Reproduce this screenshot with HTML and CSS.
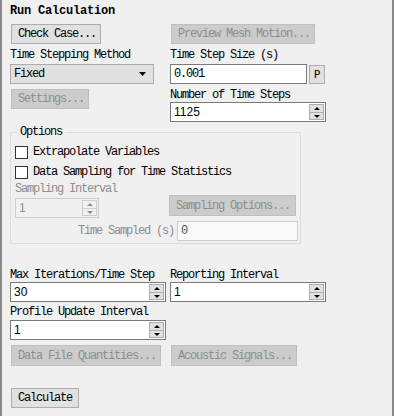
FILE: index.html
```html
<!DOCTYPE html>
<html lang="en">
<head>
  <meta charset="UTF-8">
  <title>Run Calculation</title>
  <link rel="stylesheet" href="styles.css">
</head>
<body>
  <div class="panel">
    <div class="title">Run Calculation</div>

    <div class="two row1">
      <div><button class="btn btn-check">Check Case...</button></div>
      <div><button class="btn disabled btn-preview">Preview Mesh Motion...</button></div>
    </div>

    <div class="two row2">
      <div>
        <div class="label">Time Stepping Method</div>
        <div class="select">
          <span>Fixed</span>
          <svg class="caret" width="7" height="4" viewBox="0 0 7 4"><path d="M0 0h7L3.5 4z" fill="#000"/></svg>
        </div>
      </div>
      <div>
        <div class="label">Time Step Size (s)</div>
        <div class="field-row">
          <div class="field field-step"><span class="mono">0.001</span></div>
          <button class="btn btn-p">P</button>
        </div>
      </div>
    </div>

    <div class="two row3">
      <div><button class="btn disabled btn-settings">Settings...</button></div>
      <div>
        <div class="label">Number of Time Steps</div>
        <div class="field spin-field"><span class="num">1125</span><span class="spin"><span class="up"></span><span class="down"></span></span></div>
      </div>
    </div>

    <fieldset class="options">
      <legend>Options</legend>
      <div class="chk-row"><span class="chk"></span>Extrapolate Variables</div>
      <div class="chk-row"><span class="chk"></span>Data Sampling for Time Statistics</div>
      <div class="sampling">
        <div>
          <div class="label dim">Sampling Interval</div>
          <div class="field spin-field off"><span class="num">1</span><span class="spin"><span class="up"></span><span class="down"></span></span></div>
        </div>
        <button class="btn disabled btn-sampling">Sampling Options...</button>
      </div>
      <div class="sampled-row">
        <span class="label dim">Time Sampled (s)</span>
        <div class="field off-light"><span class="mono">0</span></div>
      </div>
    </fieldset>

    <div class="two row4">
      <div>
        <div class="label">Max Iterations/Time Step</div>
        <div class="field spin-field"><span class="num">30</span><span class="spin"><span class="up"></span><span class="down"></span></span></div>
      </div>
      <div>
        <div class="label">Reporting Interval</div>
        <div class="field spin-field"><span class="num">1</span><span class="spin"><span class="up"></span><span class="down"></span></span></div>
      </div>
    </div>

    <div class="two row5">
      <div>
        <div class="label">Profile Update Interval</div>
        <div class="field spin-field"><span class="num">1</span><span class="spin"><span class="up"></span><span class="down"></span></span></div>
      </div>
    </div>

    <div class="two row6">
      <div><button class="btn disabled btn-data">Data File Quantities...</button></div>
      <div><button class="btn disabled btn-acoustic">Acoustic Signals...</button></div>
    </div>

    <div class="row7">
      <button class="btn btn-calc">Calculate</button>
    </div>
  </div>
</body>
</html>
```

FILE: styles.css
```css
body {
  margin: 0;
  padding: 0;
  background-color: #f0f0f0;
  font-family: "Liberation Mono", monospace;
  font-size: 12px;
  letter-spacing: -1.2px;
  color: #000;
}

.panel {
  box-sizing: border-box;
  width: 394px;
  height: 416px;
  border-left: 2px solid #8a8a8a;
  border-right: 2px solid #8a8a8a;
  padding-left: 8px;
  overflow: hidden;
}

.title {
  padding-top: 4px;
  line-height: 14px;
  font-weight: bold;
  letter-spacing: -0.2px;
}

.two {
  display: grid;
  grid-template-columns: 155px 155px;
  column-gap: 5px;
}

.label {
  line-height: 14px;
  white-space: nowrap;
}

.dim {
  color: #8d8d8d;
}

.mono {
  font-family: "Liberation Mono", monospace;
}

.num {
  font-family: "Liberation Sans", sans-serif;
  letter-spacing: 0;
}

/* buttons */
.btn {
  box-sizing: border-box;
  display: block;
  height: 20px;
  margin: 0 0 0 1px;
  padding: 0 0 0 6px;
  font-family: inherit;
  font-size: 12px;
  letter-spacing: -1.2px;
  text-align: left;
  color: #000;
  background-color: #e1e1e1;
  border: 1px solid #adadad;
  border-radius: 0;
  white-space: nowrap;
}

.btn.disabled {
  color: #8d8d8d;
  background-color: #cccccc;
  border-color: #bfbfbf;
}

.row1 {
  margin-top: 6px;
}

.btn-check { width: 90px; }
.btn-preview { width: 144px; }

/* row 2 */
.row2 {
  margin-top: 4px;
}

.row2 .label {
  margin-bottom: 2px;
}

.select {
  box-sizing: border-box;
  width: 144px;
  height: 20px;
  display: flex;
  align-items: center;
  justify-content: space-between;
  padding: 0 7px 0 3px;
  background-color: #e1e1e1;
  border: 1px solid #adadad;
}

.field-row {
  display: flex;
  align-items: flex-start;
}

.field {
  box-sizing: border-box;
  height: 20px;
  display: flex;
  align-items: center;
  padding-left: 3px;
  background-color: #fff;
  border: 1px solid #7a7a7a;
}

.field-step {
  width: 145px;
}

.btn-p {
  width: 17px;
  height: 19px;
  margin: 1px 0 0 2px;
  padding: 0;
  text-align: center;
  font-family: "DejaVu Sans Mono", monospace;
  font-size: 11px;
  letter-spacing: 0;
}

/* row 3 */
.row3 {
  margin-top: 4px;
}

.btn-settings {
  width: 78px;
  margin-top: 1px;
}

.spin-field {
  width: 156px;
  justify-content: space-between;
}

.spin {
  box-sizing: border-box;
  width: 15px;
  height: 16px;
  margin-right: 1px;
  display: flex;
  flex-direction: column;
  background-color: #e1e1e1;
  border: 1px solid #adadad;
}

.spin .up,
.spin .down {
  flex: 1;
  position: relative;
}

.spin .up {
  border-bottom: 1px solid #adadad;
}

.spin .up::after,
.spin .down::after {
  content: "";
  position: absolute;
  left: 4px;
  border-left: 3px solid transparent;
  border-right: 3px solid transparent;
}

.spin .up::after {
  top: 2px;
  border-bottom: 3px solid #000;
}

.spin .down::after {
  top: 2px;
  border-top: 3px solid #000;
}

/* options group */
.options {
  box-sizing: border-box;
  width: 291px;
  margin: 3px 0 0 0;
  padding: 3px 0 2px 4px;
  border: 1px solid #dcdcdc;
}

.options legend {
  margin-left: 2px;
  padding: 0 3px;
  line-height: 14px;
}

.chk-row {
  height: 20px;
  display: flex;
  align-items: center;
  gap: 5px;
  white-space: nowrap;
}

.chk {
  box-sizing: border-box;
  width: 13px;
  height: 13px;
  background-color: #fff;
  border: 1px solid #333;
}

.sampling {
  display: grid;
  grid-template-columns: 84px 127px;
  column-gap: 70px;
  align-items: end;
}

.sampling .label {
  margin-bottom: 2px;
}

.spin-field.off {
  width: 84px;
  color: #8d8d8d;
  background-color: #f0f0f0;
  border-color: #cccccc;
}

.spin-field.off .spin {
  background-color: #f0f0f0;
  border-color: #cccccc;
}

.spin-field.off .up {
  border-bottom-color: #cccccc;
}

.spin-field.off .up::after { border-bottom-color: #8d8d8d; }
.spin-field.off .down::after { border-top-color: #8d8d8d; }

.btn-sampling {
  width: 127px;
  height: 21px;
  margin: 0 0 2px 0;
}

.sampled-row {
  display: flex;
  align-items: center;
  gap: 3px;
  margin-top: 3px;
  padding-left: 63px;
}

.off-light {
  width: 121px;
  color: #555;
  background-color: #f9f9f9;
  border-color: #cccccc;
}

/* lower rows */
.row4 {
  margin-top: 24px;
}

.row4 .spin-field,
.row5 .spin-field {
  width: 156px;
}

.row5 {
  margin-top: 3px;
}

.row5 .label {
  margin-bottom: 1px;
}

.row6 {
  margin-top: 5px;
}

.btn-data {
  width: 150px;
  height: 21px;
}

.btn-acoustic {
  width: 126px;
  height: 21px;
}

.row7 {
  margin-top: 22px;
}

.btn-calc {
  width: 68px;
}
```
